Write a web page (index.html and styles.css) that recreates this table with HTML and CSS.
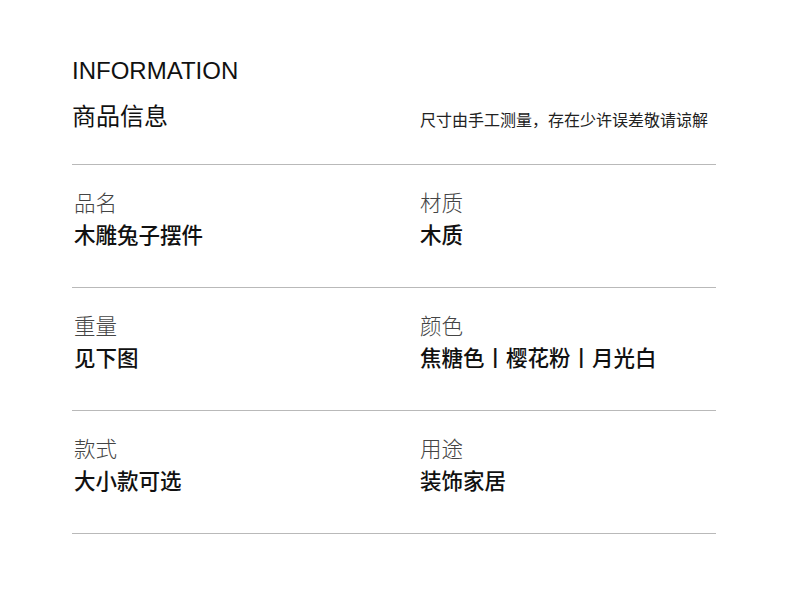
FILE: index.html
```html
<!DOCTYPE html>
<html lang="zh-CN">
<head>
<meta charset="utf-8">
<title>商品信息</title>
<link rel="stylesheet" href="styles.css">
</head>
<body>
<main class="sheet">
  <header class="head">
    <div class="head-title">
      <h1 class="en">INFORMATION</h1>
      <h2 class="zh">商品信息</h2>
    </div>
    <p class="note">尺寸由手工测量，存在少许误差敬请谅解</p>
  </header>
  <section class="row">
    <div class="cell"><div class="label">品名</div><div class="value">木雕兔子摆件</div></div>
    <div class="cell"><div class="label">材质</div><div class="value">木质</div></div>
  </section>
  <section class="row">
    <div class="cell"><div class="label">重量</div><div class="value">见下图</div></div>
    <div class="cell"><div class="label">颜色</div><div class="value">焦糖色丨樱花粉丨月光白</div></div>
  </section>
  <section class="row">
    <div class="cell"><div class="label">款式</div><div class="value">大小款可选</div></div>
    <div class="cell"><div class="label">用途</div><div class="value">装饰家居</div></div>
  </section>
</main>
</body>
</html>
```
FILE: styles.css
```css
html, body {
  margin: 0;
  padding: 0;
  background: #ffffff;
}
body {
  font-family: "Noto Sans CJK SC", "Noto Sans", sans-serif;
  color: #111;
}
.sheet {
  width: 644px;
  margin-left: 72px;
  padding-top: 57px;
}
.head {
  display: grid;
  grid-template-columns: 348px 1fr;
  align-items: end;
  padding-bottom: 35px;
  border-bottom: 1px solid #b9b9b9;
}
.en {
  margin: 0;
  font-family: "Liberation Sans", Arial, sans-serif;
  font-weight: 400;
  font-size: 24px;
  line-height: 28px;
  color: #111;
}
.zh {
  margin: 16px 0 0;
  font-weight: 400;
  font-size: 24px;
  line-height: 28px;
  color: #111;
}
.note {
  margin: 0;
  font-size: 16px;
  line-height: 20px;
  color: #222;
}
.row {
  display: grid;
  grid-template-columns: 346px 1fr;
  padding: 25px 0 0 2px;
  height: 97px;
  border-bottom: 1px solid #b9b9b9;
}
.label {
  font-size: 21.5px;
  line-height: 24px;
  color: #444;
  font-weight: 300;
}
.value {
  margin-top: 8px;
  font-size: 21.5px;
  line-height: 24px;
  color: #111;
  font-weight: 500;
}
```
